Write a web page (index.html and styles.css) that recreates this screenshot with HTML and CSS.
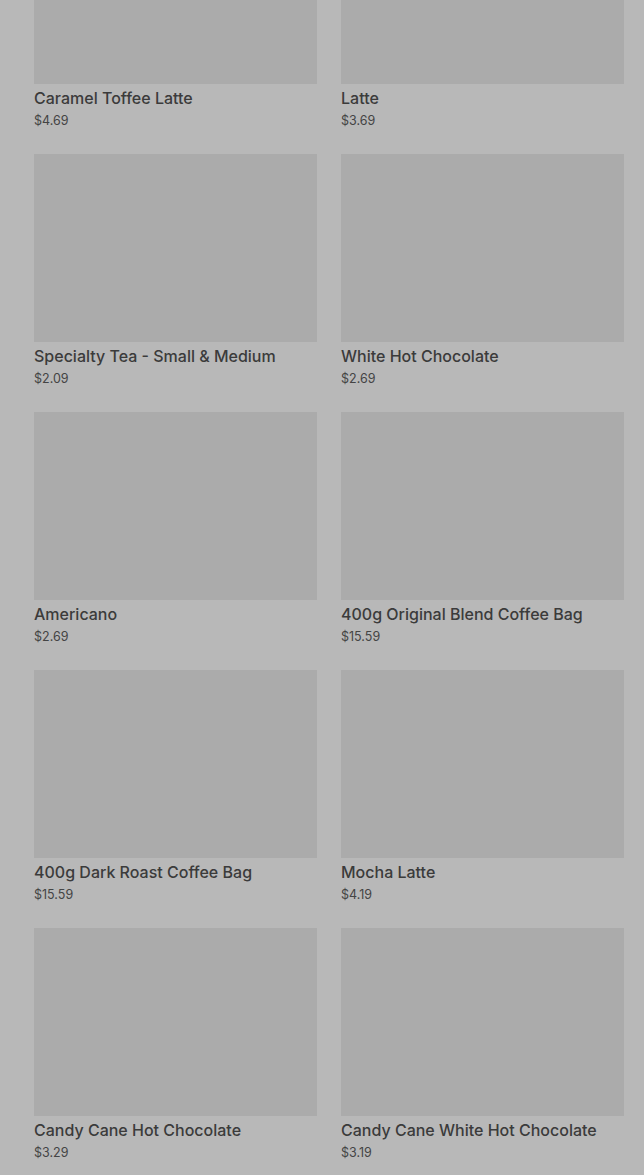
FILE: index.html
```html
<!DOCTYPE html>
<html lang="en">
<head>
    <meta charset="UTF-8">
    <meta name="viewport" content="width=device-width, initial-scale=1.0">
    <title>Menu</title>
    <link rel="stylesheet" href="styles.css">
</head>
<body>
    <div class="product-grid">
        <div class="product">
            <div class="product-image"></div>
            <div class="product-name">Caramel Toffee Latte</div>
            <div class="product-price">$4.69</div>
        </div>
        <div class="product">
            <div class="product-image"></div>
            <div class="product-name">Latte</div>
            <div class="product-price">$3.69</div>
        </div>
        <div class="product">
            <div class="product-image"></div>
            <div class="product-name">Specialty Tea - Small &amp; Medium</div>
            <div class="product-price">$2.09</div>
        </div>
        <div class="product">
            <div class="product-image"></div>
            <div class="product-name">White Hot Chocolate</div>
            <div class="product-price">$2.69</div>
        </div>
        <div class="product">
            <div class="product-image"></div>
            <div class="product-name">Americano</div>
            <div class="product-price">$2.69</div>
        </div>
        <div class="product">
            <div class="product-image"></div>
            <div class="product-name">400g Original Blend Coffee Bag</div>
            <div class="product-price">$15.59</div>
        </div>
        <div class="product">
            <div class="product-image"></div>
            <div class="product-name">400g Dark Roast Coffee Bag</div>
            <div class="product-price">$15.59</div>
        </div>
        <div class="product">
            <div class="product-image"></div>
            <div class="product-name">Mocha Latte</div>
            <div class="product-price">$4.19</div>
        </div>
        <div class="product">
            <div class="product-image"></div>
            <div class="product-name">Candy Cane Hot Chocolate</div>
            <div class="product-price">$3.29</div>
        </div>
        <div class="product">
            <div class="product-image"></div>
            <div class="product-name">Candy Cane White Hot Chocolate</div>
            <div class="product-price">$3.19</div>
        </div>
    </div>
</body>
</html>
```

FILE: styles.css
```css
body {
    margin: 0;
    background-color: #b8b8b8;
    font-family: Inter, "Noto Sans", sans-serif;
    color: #3b3b3b;
    overflow: hidden;
}

.product-grid {
    display: grid;
    grid-template-columns: 283px 283px;
    column-gap: 24px;
    row-gap: 24px;
    padding: 0 20px 40px 34px;
    margin-top: -104px;
}

.product-image {
    height: 188px;
    background-color: #ababab;
}

.product-name {
    margin-top: 3px;
    font-size: 16px;
    font-weight: 500;
    line-height: 22px;
    white-space: nowrap;
}

.product-price {
    margin-top: 3px;
    font-size: 12.5px;
    line-height: 18px;
    color: #444444;
}
```
